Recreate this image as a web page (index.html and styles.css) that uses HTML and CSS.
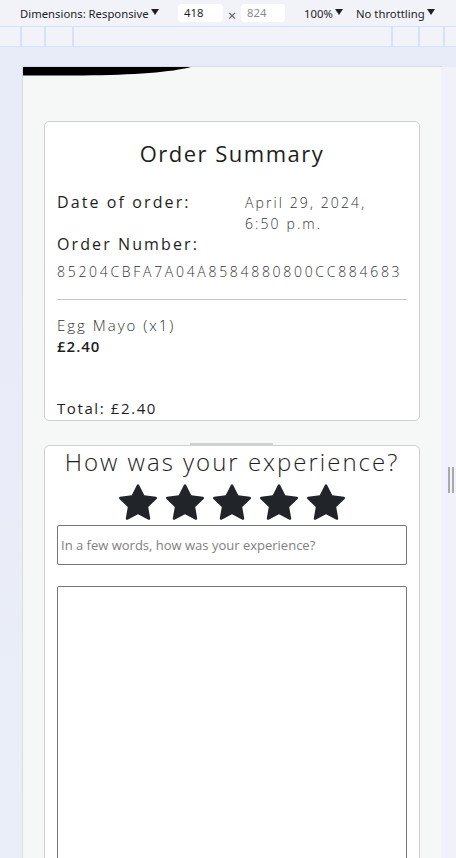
FILE: index.html
```html
<!DOCTYPE html>
<html lang="en">
<head>
<meta charset="utf-8">
<title>Order Summary</title>
<link rel="stylesheet" href="styles.css">
</head>
<body>
<div class="toolbar">
  <span class="tb-item dim">Dimensions: Responsive<span class="caret"></span></span>
  <span class="tb-box w418">418</span>
  <span class="times">×</span>
  <span class="tb-box muted">824</span>
  <span class="tb-item zoomsel">100%<span class="caret"></span></span>
  <span class="tb-item throttle">No throttling<span class="caret"></span></span>
</div>
<div class="ruler">
  <span class="tick t1"></span><span class="tick t2"></span><span class="tick t3"></span>
  <span class="ruler-space"></span>
  <span class="tick t4"></span><span class="tick t5"></span><span class="tick t6"></span>
</div>
<div class="stage">
  <div class="device">
    <svg class="swoosh" width="418" height="9" viewBox="0 0 418 9" aria-hidden="true">
      <path d="M0 0 H168 C150 5 110 8.2 60 8.4 H0 Z" fill="#000"/>
    </svg>
    <main class="content">
      <section class="card summary">
        <h2 class="title">Order Summary</h2>
        <div class="info-row">
          <div class="label">Date of order:</div>
          <div class="value">April 29, 2024,<br>6:50 p.m.</div>
        </div>
        <div class="label">Order Number:</div>
        <div class="order-no">85204CBFA7A04A8584880800CC884683</div>
        <hr class="divider">
        <div class="item-name">Egg Mayo (x1)</div>
        <div class="item-price">£2.40</div>
        <div class="total">Total: £2.40</div>
      </section>
      <section class="card review">
        <h3 class="review-title">How was your experience?</h3>
        <div class="stars">
          <svg class="star" viewBox="0 0 16 16"><path d="M3.612 15.443c-.386.198-.824-.149-.746-.592l.83-4.73L.173 6.765c-.329-.314-.158-.888.283-.95l4.898-.696L7.538.792c.197-.39.73-.39.927 0l2.184 4.327 4.898.696c.441.062.612.636.282.95l-3.522 3.356.83 4.73c.078.443-.36.79-.746.592L8 13.187l-4.389 2.256z"/></svg>
          <svg class="star" viewBox="0 0 16 16"><path d="M3.612 15.443c-.386.198-.824-.149-.746-.592l.83-4.73L.173 6.765c-.329-.314-.158-.888.283-.95l4.898-.696L7.538.792c.197-.39.73-.39.927 0l2.184 4.327 4.898.696c.441.062.612.636.282.95l-3.522 3.356.83 4.73c.078.443-.36.79-.746.592L8 13.187l-4.389 2.256z"/></svg>
          <svg class="star" viewBox="0 0 16 16"><path d="M3.612 15.443c-.386.198-.824-.149-.746-.592l.83-4.73L.173 6.765c-.329-.314-.158-.888.283-.95l4.898-.696L7.538.792c.197-.39.73-.39.927 0l2.184 4.327 4.898.696c.441.062.612.636.282.95l-3.522 3.356.83 4.73c.078.443-.36.79-.746.592L8 13.187l-4.389 2.256z"/></svg>
          <svg class="star" viewBox="0 0 16 16"><path d="M3.612 15.443c-.386.198-.824-.149-.746-.592l.83-4.73L.173 6.765c-.329-.314-.158-.888.283-.95l4.898-.696L7.538.792c.197-.39.73-.39.927 0l2.184 4.327 4.898.696c.441.062.612.636.282.95l-3.522 3.356.83 4.73c.078.443-.36.79-.746.592L8 13.187l-4.389 2.256z"/></svg>
          <svg class="star" viewBox="0 0 16 16"><path d="M3.612 15.443c-.386.198-.824-.149-.746-.592l.83-4.73L.173 6.765c-.329-.314-.158-.888.283-.95l4.898-.696L7.538.792c.197-.39.73-.39.927 0l2.184 4.327 4.898.696c.441.062.612.636.282.95l-3.522 3.356.83 4.73c.078.443-.36.79-.746.592L8 13.187l-4.389 2.256z"/></svg>
        </div>
        <input class="field" type="text" placeholder="In a few words, how was your experience?">
        <textarea class="area"></textarea>
      </section>
    </main>
  </div>
  <div class="gutter"><span class="grip"></span><span class="grip"></span></div>
</div>
</body>
</html>
```
FILE: styles.css
```css
html, body {
  margin: 0;
  padding: 0;
}
body {
  width: 456px;
  height: 858px;
  overflow: hidden;
  background: #eaedf8;
  font-family: "Open Sans", "Noto Sans", sans-serif;
  color: #212529;
}

/* devtools toolbar */
.toolbar {
  height: 27px;
  box-sizing: border-box;
  border-bottom: 1px solid #d3e3fd;
  background: #f1f3f9;
  display: flex;
  align-items: center;
  padding-left: 20px;
  font-family: "Noto Sans", "Open Sans", sans-serif;
  font-size: 11.3px;
  color: #1f1f1f;
  white-space: nowrap;
}
.tb-item {
  display: flex;
  align-items: center;
}
.caret {
  display: inline-block;
  width: 0;
  height: 0;
  border-left: 4px solid transparent;
  border-right: 4px solid transparent;
  border-top: 6px solid #1f1f1f;
  margin-left: 2px;
  margin-top: -3px;
}
.dim { width: 137px; }
.tb-box {
  width: 45px;
  height: 18px;
  box-sizing: border-box;
  background: #fff;
  border-radius: 4px;
  padding-left: 6px;
  line-height: 18px;
}
.w418 { margin-left: 21px; }
.muted { color: #8a8a8a; width: 44px; }
.times {
  width: 18px;
  text-align: center;
  color: #5f6368;
  font-size: 15px;
  line-height: 18px;
  padding-top: 3px;
}
.zoomsel { margin-left: 19px; width: 52px; }
.throttle { margin-left: 0; }

/* ruler */
.ruler {
  height: 20px;
  box-sizing: border-box;
  border-bottom: 1px solid #d3e3fd;
  background: #f1f3f9;
  display: flex;
}
.tick {
  width: 2px;
  background: #d3e3fd;
}
.t1 { margin-left: 20px; }
.t2 { margin-left: 22px; }
.t3 { margin-left: 26px; }
.ruler-space { flex: 1; }
.t4 { margin-right: 25px; }
.t5 { margin-right: 23px; }
.t6 { margin-right: 11px; }

/* stage */
.stage {
  display: flex;
  padding: 20px 0 0 23px;
  height: 811px;
  box-sizing: border-box;
  background: linear-gradient(180deg, #e8ebf8 0, #eaeef8 100%);
}
.device {
  width: 418px;
  flex: none;
  background: #f6f7f7;
  box-shadow: 0 0 0 1px rgba(0, 0, 0, 0.07);
  overflow: hidden;
}
.swoosh { display: block; }
.gutter {
  width: 15px;
  background: #f0f1f9;
  display: flex;
  align-items: flex-start;
  padding-left: 7px;
  gap: 2px;
  box-sizing: border-box;
}
.grip {
  width: 2px;
  height: 26px;
  margin-top: 400px;
  background: #a9a9a9;
}

/* page content */
.content {
  padding: 45px 21px 0;
  display: flex;
  flex-direction: column;
  gap: 24px;
}
.card {
  position: relative;
  background: #fff;
  border: 1px solid #d0d0d0;
  border-radius: 5px;
  padding: 0 12px;
}
.summary {
  padding-top: 16px;
  height: 300px;
  box-sizing: border-box;
}
.title {
  margin: 0;
  text-align: center;
  font-size: 22px;
  line-height: 30px;
  font-weight: 500;
  letter-spacing: 1.5px;
  color: #1e1e1e;
}
.info-row {
  display: flex;
  margin-top: 24px;
}
.info-row .label { width: 188px; flex: none; }
.label {
  font-size: 16px;
  line-height: 21px;
  font-weight: 500;
  letter-spacing: 2.1px;
  color: #1e1e1e;
}
.value {
  font-size: 14px;
  line-height: 21px;
  font-weight: 300;
  letter-spacing: 2.1px;
  color: #333;
}
.order-no {
  margin-top: 6px;
  font-size: 14px;
  line-height: 21px;
  font-weight: 300;
  letter-spacing: 2.7px;
  color: #333;
}
.divider {
  border: 0;
  height: 1px;
  background: #c8c8c8;
  margin: 17px 0 0;
}
.item-name {
  margin-top: 15px;
  font-size: 15px;
  line-height: 21px;
  font-weight: 300;
  letter-spacing: 2px;
  color: #333;
}
.item-price {
  font-size: 15px;
  line-height: 21px;
  font-weight: 600;
  letter-spacing: 1px;
  color: #1e1e1e;
}
.total {
  margin-top: 41px;
  font-size: 15px;
  line-height: 21px;
  font-weight: 500;
  letter-spacing: 1.6px;
  color: #1e1e1e;
}

.review::before {
  content: "";
  position: absolute;
  top: -3px;
  left: 145px;
  width: 83px;
  height: 2px;
  background: #d0d0d0;
}
.review-title {
  margin: 0;
  text-align: center;
  font-size: 24px;
  line-height: 32px;
  font-weight: 300;
  letter-spacing: 2px;
  color: #1e1e1e;
}
.stars {
  display: flex;
  justify-content: center;
  gap: 9px;
  margin-top: 5px;
}
.star {
  width: 38px;
  height: 38px;
  fill: #212529;
}
.field {
  display: block;
  box-sizing: border-box;
  width: 100%;
  height: 40px;
  margin-top: 4px;
  border: 1px solid #767676;
  border-radius: 2px;
  padding: 0 3px;
  font-family: "Open Sans", sans-serif;
  font-size: 13px;
  font-weight: 400;
  color: #333;
  background: #fff;
}
.field::placeholder { color: #808080; }
.area {
  display: block;
  box-sizing: border-box;
  width: 100%;
  height: 320px;
  margin-top: 21px;
  border: 1px solid #767676;
  border-radius: 2px;
  resize: none;
  background: #fff;
}
```
